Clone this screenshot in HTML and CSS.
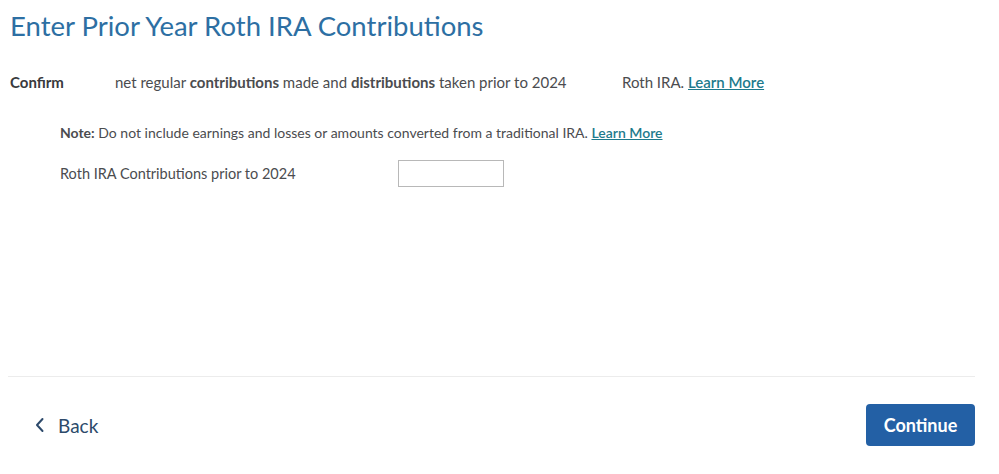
FILE: index.html
```html
<!DOCTYPE html>
<html lang="en">
<head>
    <meta charset="UTF-8">
    <meta name="viewport" content="width=device-width, initial-scale=1.0">
    <title>Enter Prior Year Roth IRA Contributions</title>
    <link rel="stylesheet" href="styles.css">
</head>
<body>

<div class="page">
    <h1 class="page-title">Enter Prior Year Roth IRA Contributions</h1>

    <!-- Intro line -->
    <div class="intro">
        <span class="intro-lead">Confirm</span>
        <span class="intro-body">net regular <b>contributions</b> made and <b>distributions</b> taken prior to 2024</span>
        <span class="intro-tail">Roth IRA. <a href="#" class="link">Learn More</a></span>
    </div>

    <div class="form-area">
        <p class="note"><b>Note:</b> Do not include earnings and losses or amounts converted from a traditional IRA. <a href="#" class="link">Learn More</a></p>
        <div class="field-row">
            <label for="prior-contrib" class="field-label">Roth IRA Contributions prior to 2024</label>
            <input type="text" id="prior-contrib" class="field-input">
        </div>
    </div>

    <!-- Footer nav -->
    <div class="footer">
        <a href="#" class="back-link">
            <svg class="back-icon" width="12" height="16" viewBox="0 0 12 16">
                <path d="M8.5 2 L3 8 L8.5 14" fill="none" stroke="#2d4a6b" stroke-width="2" stroke-linecap="round" stroke-linejoin="round"/>
            </svg>
            Back
        </a>
        <button class="continue-btn">Continue</button>
    </div>
</div>

</body>
</html>
```

FILE: styles.css
```css
body {
    margin: 0;
    padding: 0;
    font-family: Lato, "Noto Sans", sans-serif;
    color: #393a3d;
    background-color: #ffffff;
}

.page {
    width: 967px;
    padding: 0 0 0 8px;
}

.page-title {
    margin: 0;
    padding: 10px 0 0 2px;
    font-size: 27.5px;
    font-weight: 400;
    color: #2d6fa3;
    line-height: 32px;
}

.intro {
    display: flex;
    margin-top: 30px;
    padding-left: 2px;
    font-size: 15px;
    line-height: 20px;
}

.intro-lead {
    font-weight: 700;
    width: 105px;
}

.intro-body {
    width: 507px;
    color: #4b4c4f;
}

.intro-tail {
    color: #4b4c4f;
}

.link {
    color: #1d7a8c;
    font-weight: 600;
    text-decoration: underline;
}

.form-area {
    padding-left: 52px;
    margin-top: 32px;
    height: 252px;
    border-bottom: 1px solid #ececec;
}

.note {
    margin: 0;
    font-size: 14px;
    line-height: 18px;
    color: #4b4c4f;
}

.field-row {
    display: flex;
    align-items: center;
    margin-top: 18px;
}

.field-label {
    width: 338px;
    font-size: 14.5px;
    color: #4b4c4f;
}

.field-input {
    width: 100px;
    height: 21px;
    margin: 0;
    border: 1px solid #b8b8b8;
    border-radius: 0;
    padding: 2px;
}

.footer {
    display: flex;
    justify-content: space-between;
    align-items: center;
    padding-top: 27px;
}

.back-link {
    display: flex;
    align-items: center;
    gap: 12px;
    margin-left: 26px;
    font-size: 19px;
    color: #2d4a6b;
    text-decoration: none;
}

.continue-btn {
    width: 109px;
    height: 42px;
    border: none;
    border-radius: 4px;
    background-color: #2360a5;
    color: #ffffff;
    font-family: Lato, "Noto Sans", sans-serif;
    font-size: 18px;
    font-weight: 700;
    cursor: pointer;
}
```
